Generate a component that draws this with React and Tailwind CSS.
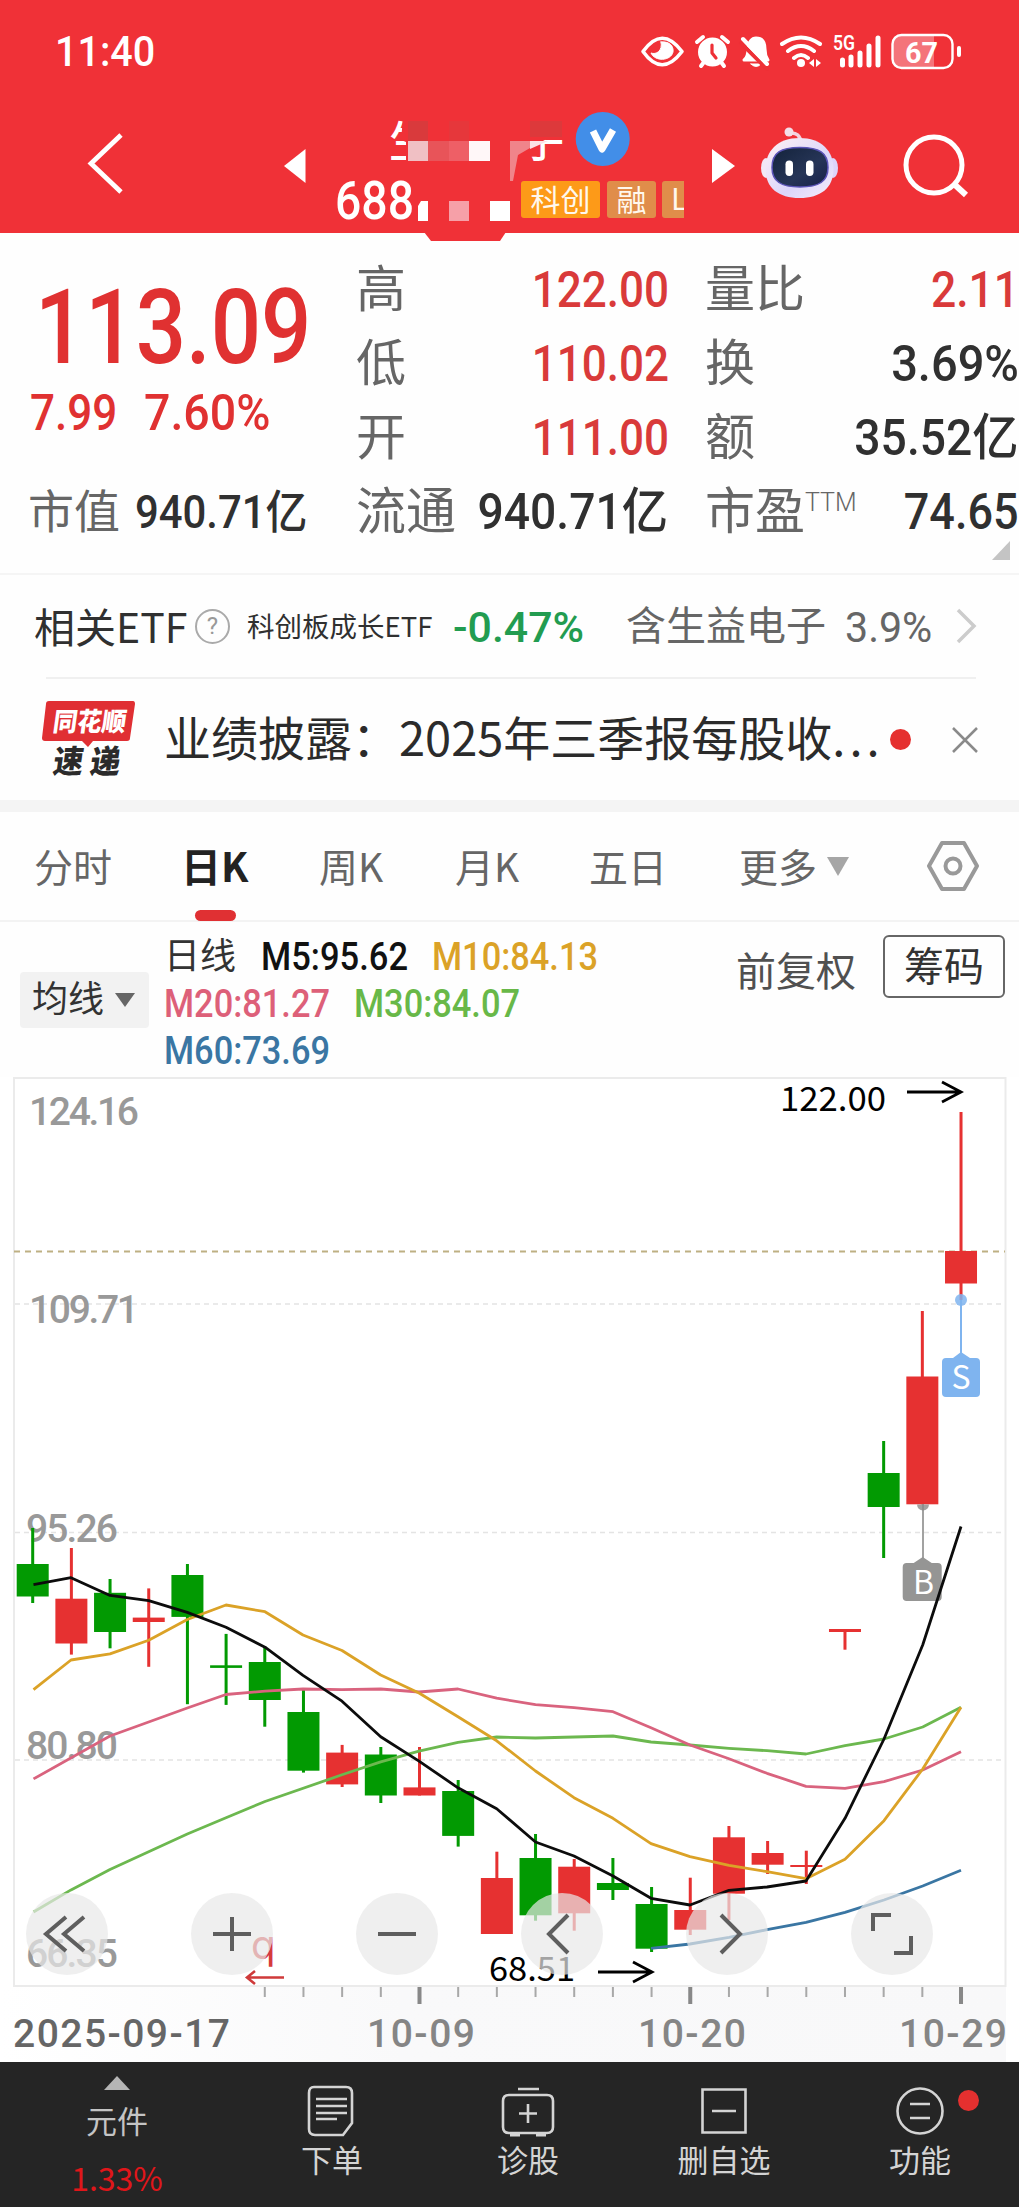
import React from 'react';

const candleX = (i) => 32.7 + i * 38.68;

// [direction, high, body top, body bottom, low]
const candles = [
  ['down', 1528, 1564, 1596.5, 1603],
  ['up', 1548, 1598.7, 1643.5, 1654.6],
  ['down', 1579, 1592.8, 1632, 1648.3],
  ['up', 1588.4, 1617.6, 1622, 1666.8],
  ['down', 1564, 1575, 1616.9, 1704.2],
  ['down', 1633.9, 1665.3, 1667.9, 1704.9],
  ['down', 1646.5, 1662, 1700, 1726.7],
  ['down', 1690, 1712, 1770.7, 1772.6],
  ['up', 1744.9, 1752.6, 1784.4, 1787],
  ['down', 1747, 1754.5, 1795.5, 1803],
  ['up', 1747, 1787.4, 1795.5, 1795.5],
  ['down', 1780, 1791, 1835.9, 1846.6],
  ['up', 1851.7, 1878, 1934, 1934],
  ['down', 1834, 1858, 1915.3, 1920.7],
  ['up', 1859, 1866.7, 1913.3, 1930.7],
  ['down', 1858, 1883, 1890, 1900],
  ['down', 1887, 1904, 1948.7, 1952],
  ['up', 1877.7, 1910, 1929.7, 1935],
  ['up', 1826, 1837.3, 1893.7, 1920],
  ['up', 1841, 1853, 1864.7, 1874],
  ['up', 1850.7, 1865, 1867, 1884],
  ['up', 1629, 1629, 1632, 1649.7],
  ['down', 1441, 1473, 1507, 1558],
  ['up', 1311, 1376.5, 1504.3, 1504.3],
  ['up', 1112, 1251, 1283.5, 1300],
];

const averages = [
  {
    color: '#3a76a3',
    points: '651,1948.3 690,1944 729,1937.3 767,1929.7 806,1922.3 845,1912.3 884,1900 922.7,1886 961,1870.3',
  },
  {
    color: '#6cb84f',
    points:
      '33.5,1912 71,1889.9 110,1869.5 187.3,1834 226,1817.7 265,1801.5 342,1774.8 380.7,1761.9 419,1751.1 458,1742.3 496.7,1737 535.5,1738 613,1736 651,1742 690,1745 729,1748.3 767,1750.7 806,1754 845,1745.7 884,1739 922.7,1727 961,1707.3',
  },
  {
    color: '#d9637e',
    points:
      '33.5,1778.9 110,1736 187.3,1708 226,1694.5 265,1691.2 303,1689 342,1689.7 380.7,1689 419,1692 458,1689 496.7,1698.2 535.5,1704.7 574,1707.7 613,1711.7 651,1727.7 690,1745 729,1758.7 767,1773.3 806,1786.3 845,1788.3 884,1781.7 922.7,1770 961,1751.7',
  },
  {
    color: '#dba227',
    points:
      '33.5,1689.7 71,1660 110,1653.9 148.7,1640.2 187.3,1619.5 226,1605 265,1611.7 303,1635 342,1650.5 380.7,1675 419,1693 458,1716.7 496.7,1740.8 535.5,1771 574,1797.7 613,1818.3 651,1843.7 690,1856.7 729,1865.3 767,1871.7 806,1878.7 845,1859.3 884,1820.7 922.7,1769 961,1707.3',
  },
  {
    color: '#0c0c0c',
    points:
      '33.5,1584.7 71,1577.7 110,1595.4 148.7,1600.6 187.3,1612.4 226,1627.2 265,1647.2 303,1675.3 342,1701.2 380.7,1736.7 419,1761.1 458,1787.8 496.7,1808.7 535.5,1842 574,1856 613,1876 651,1898.3 690,1905 729,1890.3 767,1887 806,1881 845,1818.3 884,1739 922.7,1645 961,1526.5',
  },
];

const priceLabels = [
  { text: '124.16', x: 29, y: 1125, w: 110 },
  { text: '109.71', x: 29, y: 1323, w: 110 },
  { text: '95.26', x: 26, y: 1542, w: 92 },
  { text: '80.80', x: 26, y: 1759, w: 92 },
  { text: '66.35', x: 26, y: 1967, w: 92 },
];

const dates = [
  { text: '2025-09-17', x: 13, w: 217, color: '#666666' },
  { text: '10-09', x: 367, w: 108, color: '#858585' },
  { text: '10-20', x: 638, w: 108, color: '#858585' },
  { text: '10-29', x: 899, w: 108, color: '#858585' },
];

const StatusIcons = () => (
  <svg className="h-[40px] w-[340px]" viewBox="635 30 340 40" fill="none" stroke="#fff" strokeLinecap="round" strokeLinejoin="round">
    <path d="M643 50.5Q662 24 682 50.5Q662 77 643 50.5Z" strokeWidth="3.6" />
    <path d="M661 41c8-1 13 4 12 10-2 9-18 10-22 1 5 2 12-2 10-11Z" fill="#fff" strokeWidth="1" />
    <circle cx="712.500" cy="51" r="13" fill="#fff" strokeWidth="3" />
    <path d="M697 41l6-5M728 41l-6-5M701 65l3-4M724 65l-3-4" strokeWidth="4" />
    <path d="M712 44v8l4 5" stroke="#ee3036" strokeWidth="3.200" />
    <path d="M744 59c4-3 4-7 4-11 0-7 4-11 8-11h0c7 0 9 5 9 11 0 5 1 8 3 11Z" fill="#fff" strokeWidth="3" />
    <path d="M751 63h10q-5 5-10 0Z" fill="#fff" strokeWidth="1" />
    <path d="M741 42l26 26" stroke="#ee3036" strokeWidth="4" />
    <path d="M743 38l24 25" strokeWidth="4" />
    <path d="M782 43q19-13 38 0M788 50q13-10 26 0M794 57q7-6 14 0" strokeWidth="4" />
    <circle cx="801" cy="62" r="4" fill="#fff" stroke="none" />
    <path d="M814 58v8l-5-4zM816 58v8l5-4z" fill="#fff" stroke="none" />
    <path d="M842.500 59v5M851 56v8M860 52v12M869 45v19M878 37v27" strokeWidth="5" />
    <text x="833" y="49" fontSize="20" fontWeight="600" fill="#fff" stroke="none" textLength="22" lengthAdjust="spacingAndGlyphs">5G</text>
    <path d="M900 34.500h34v32h-34q-8 0-8-8v-16q0-8 8-8Z" fill="#f4747a" stroke="none" />
    <rect x="892.500" y="34" width="60" height="33" rx="9" strokeWidth="2.400" />
    <path d="M959 47v7" strokeWidth="4" />
    <text x="905" y="61.500" fontSize="29" fontWeight="700" fill="#fff" stroke="none" textLength="33" lengthAdjust="spacingAndGlyphs">67</text>
  </svg>
);

// Stock name and code with the mosaic laid over them
const StockTitle = () => (
  <svg className="h-[130px] w-[406px]" viewBox="306 111 406 130">
    <defs>
      <clipPath id="nameStart">
        <path d="M385 118h18l-2 22 5 2v22h-21z" />
      </clipPath>
      <clipPath id="nameEnd">
        <path d="M518 155l32-18h20v28h-40z" />
      </clipPath>
    </defs>
    <g fill="#fff" fontSize="43" fontWeight="500" className='font-["Noto_Sans_CJK_SC",sans-serif]'>
      <text x="389" y="157" clipPath="url(#nameStart)">生</text>
      <text x="521" y="157" clipPath="url(#nameEnd)">子</text>
    </g>
    <rect x="408" y="121" width="20" height="20" fill="#d93a3c" />
    <rect x="449" y="121" width="20" height="20" fill="#e6373b" />
    <rect x="530" y="121" width="32" height="16" fill="#dd393b" />
    <rect x="408" y="141" width="20" height="20" fill="#f0c0c4" />
    <rect x="428" y="141" width="21" height="20" fill="#e85459" />
    <rect x="449" y="141" width="20" height="20" fill="#ee5f66" />
    <rect x="469" y="141" width="21" height="20" fill="#fff7f8" />
    <path d="M510 141h32l-24 14-5 26h-3z" fill="#f0848a" />
    <path d="M530 141h18l-18 8z" fill="#fbe3e5" />
    <text x="335" y="219" fontSize="53" fontWeight="500" fill="#fff" textLength="79" lengthAdjust="spacingAndGlyphs">688</text>
    <path d="M418 206l3-5h7v20h-10z" fill="#fff" />
    <rect x="449" y="201" width="20" height="20" fill="#f6a0a8" />
    <rect x="490" y="201" width="20" height="20" fill="#fff" />
    <circle cx="602.700" cy="139" r="27" fill="#428ee8" />
    <path d="M593 131l9 18 11-19" fill="none" stroke="#fff" strokeWidth="7" strokeLinejoin="round" />
    <rect x="521" y="181" width="79" height="37" rx="3" fill="#fd9a18" />
    <rect x="607" y="181" width="49" height="37" rx="3" fill="#e08d4a" />
    <path d="M665 181h19v37h-19q-3 0-3-3v-31q0-3 3-3z" fill="#e08d4a" />
    <g fill="#fff8ee" fontSize="30" className='font-["Noto_Sans_CJK_SC",sans-serif]'>
      <text x="530.500" y="211">科创</text>
      <text x="616.500" y="211">融</text>
      <svg x="670" y="181" width="14" height="37"><text x="1" y="29">L</text></svg>
    </g>
  </svg>
);

const Robot = () => (
  <svg className="h-[76px] w-[80px]" viewBox="760 124 80 76">
    <defs>
      <linearGradient id="shell" x1="0" y1="0" x2="1" y2="1">
        <stop offset="0" stopColor="#fff1f4" />
        <stop offset=".6" stopColor="#dcd6fa" />
        <stop offset="1" stopColor="#f6eefc" />
      </linearGradient>
      <linearGradient id="face" x1="0" y1="0" x2="1" y2="1">
        <stop offset="0" stopColor="#14233b" />
        <stop offset=".6" stopColor="#263557" />
        <stop offset="1" stopColor="#17204a" />
      </linearGradient>
    </defs>
    <path d="M790 133q10-1 11 10" fill="none" stroke="#f3d3df" strokeWidth="3.500" />
    <circle cx="789" cy="132" r="4.500" fill="#f3dfe8" />
    <ellipse cx="766" cy="168" rx="5" ry="10" fill="#f2e8f5" />
    <ellipse cx="833" cy="168" rx="5" ry="10" fill="#ddd4fa" />
    <path d="M799.500 138c22 0 34 13 34 31 0 19-13 29-34 29s-34-10-34-29c0-18 12-31 34-31z" fill="url(#shell)" />
    <path d="M800 147.500c19 0 28 5 28 20 0 14-9 19.500-28 19.500s-28-5.500-28-19.500c0-15 9-20 28-20z" fill="url(#face)" stroke="#5b54b8" strokeWidth="1.500" />
    <rect x="785.500" y="160.500" width="7.500" height="15.500" rx="3.700" fill="#fff" />
    <rect x="806" y="160.500" width="7.500" height="15.500" rx="3.700" fill="#fff" />
  </svg>
);

const Header = () => (
  <header className="relative h-[233px] bg-[#f03137] text-white">
    <div className="flex h-[102px] items-center justify-between pr-[44px] pl-[55px]">
      <span className="inline-block origin-left scale-x-[.94] text-[42px] font-medium">11:40</span>
      <StatusIcons />
    </div>
    <div className="flex h-[130px] items-start">
      <svg className="mt-[28px] ml-[84px] h-[66px] w-[42px]" viewBox="84 130 42 66" fill="none" stroke="#fff" strokeWidth="4.800">
        <path d="M121 135L91 163.500 121 192" />
      </svg>
      <svg className="mt-[46px] ml-[157px] h-[36px] w-[23px]" viewBox="283 148 23 36">
        <path d="M305.500 149v34L284 166z" fill="#fff" />
      </svg>
      <div className="mt-[9px]">
        <StockTitle />
      </div>
      <svg className="mt-[46px] h-[36px] w-[24px]" viewBox="712 148 24 36">
        <path d="M712 149v34l23-17z" fill="#fff" />
      </svg>
      <div className="mt-[22px] ml-[24px]">
        <Robot />
      </div>
      <svg className="mt-[30px] ml-[60px] h-[68px] w-[72px]" viewBox="900 132 72 68" fill="none" stroke="#fff" strokeWidth="5">
        <circle cx="934" cy="165" r="28" />
        <path d="M954 184l12 11" strokeWidth="6" />
      </svg>
    </div>
    <svg className="absolute top-[232px] left-[424px] h-[10px] w-[82px]" viewBox="0 0 82 10">
      <path d="M0 0h82l-6 9H7z" fill="#f03137" />
    </svg>
  </header>
);

const Stat = ({ label, sup, value, color }) => (
  <div className="flex h-[74px] items-center justify-between pt-[2px]">
    <span className="flex text-[50px] leading-[64px] whitespace-nowrap text-[#666666]">
      {label}
      {sup && <sup className="mt-[22px] text-[25px] leading-none font-light">{sup}</sup>}
    </span>
    <span className={`inline-block origin-right text-[50px] leading-[64px] font-medium whitespace-nowrap ${color}`}>{value}</span>
  </div>
);

const Quote = () => (
  <section className="relative flex h-[342px] border-b-2 border-[#f5f5f5] pt-[19px]">
    <div className="w-[356px] pl-[30px] text-[#e03131]">
      <div className="mt-[10px] flex h-[130px] items-center pl-[5px]">
        <span className="inline-block origin-left scale-x-[.86] text-[103px] leading-none font-medium">113.09</span>
      </div>
      <div className="mt-[2px] flex h-[38px] items-center text-[50px] leading-[38px] font-medium">
        <span className="w-[114px]"><span className="inline-block origin-left scale-x-[.88]">7.99</span></span>
        <span className="inline-block origin-left scale-x-[.93]">7.60%</span>
      </div>
      <div className="mt-[42px] flex h-[74px] items-center pt-[2px] leading-[60px] whitespace-nowrap">
        <span className="-ml-[2px] w-[107px] text-[46px] text-[#666666]">市值</span>
        <span className="inline-block origin-left scale-x-[.91] text-[46px] font-medium text-[#303030]">940.71亿</span>
      </div>
    </div>
    <div className="w-[312px]">
      <Stat label="高" value="122.00" color="translate-x-px scale-x-[.88] text-[#d93a3a]" />
      <Stat label="低" value="110.02" color="translate-x-px scale-x-[.88] text-[#d93a3a]" />
      <Stat label="开" value="111.00" color="translate-x-px scale-x-[.88] text-[#d93a3a]" />
      <Stat label="流通" value="940.71亿" color="scale-x-[.925] text-[#303030]" />
    </div>
    <div className="ml-[37px] w-[314px]">
      <Stat label="量比" value="2.11" color="scale-x-[.89] text-[#d93a3a]" />
      <Stat label="换" value="3.69%" color="scale-x-[.94] text-[#303030]" />
      <Stat label="额" value="35.52亿" color="scale-x-[.925] text-[#303030]" />
      <Stat label="市盈" sup="TTM" value="74.65" color="scale-x-[.9] text-[#303030]" />
    </div>
    <svg className="absolute right-[9px] bottom-[13px] h-[19px] w-[18px]" viewBox="0 0 18 19">
      <path d="M18 0v19H0z" fill="#c4c4c4" />
    </svg>
  </section>
);

const RelatedEtf = () => (
  <div className="flex h-[102px] items-center whitespace-nowrap">
    <span className="ml-[34px] w-[161px] text-[41px] text-[#303030] font-['Noto_Sans_CJK_SC',sans-serif]">相关ETF</span>
    <span className="flex h-[35px] w-[35px] items-center justify-center rounded-full border-2 border-[#aaaaaa] text-[24px] text-[#999999]">?</span>
    <span className="ml-[17px] w-[206px] text-[27.5px] text-[#303030] font-['Noto_Sans_CJK_SC',sans-serif]">科创板成长ETF</span>
    <span className="w-[173px] pt-[2px] text-[42px] font-medium text-[#229c50]"><span className="inline-block origin-left scale-x-[1.02]">-0.47%</span></span>
    <span className="w-[219px] pt-[2px] text-[40px] text-[#666666]">含生益电子</span>
    <span className="w-[111px] pt-[2px] text-[42px] text-[#666666]"><span className="inline-block origin-left scale-x-[.98]">3.9%</span></span>
    <svg className="h-[38px] w-[22px]" viewBox="0 0 22 38" fill="none" stroke="#cccccc" strokeWidth="3.500">
      <path d="M2 3l16 16L2 35" />
    </svg>
  </div>
);

const News = () => (
  <div className="flex h-[121px] items-center">
    <svg className="ml-[40px] h-[80px] w-[98px]" viewBox="40 698 98 80">
      <path d="M49 699h84q2 0 2 3l-5 34q0 3-3 3H93l-5 6-6-6H45q-3 0-3-3l4-34q0-3 3-3z" fill="#e02f33" />
      <g fontWeight="900" className='font-["Noto_Sans_CJK_SC",sans-serif]'>
        <text transform="translate(52 729) skewX(-8)" fontSize="26" fill="#fff" textLength="73" lengthAdjust="spacingAndGlyphs">同花顺</text>
        <text transform="translate(52 771) skewX(-8)" fontSize="32" fill="#2b2b2b" textLength="30" lengthAdjust="spacingAndGlyphs">速</text>
        <text transform="translate(89 771) skewX(-8)" fontSize="32" fill="#2b2b2b" textLength="30" lengthAdjust="spacingAndGlyphs">递</text>
      </g>
    </svg>
    <p className="mb-[7px] ml-[26px] w-[724px] text-[47px] whitespace-nowrap text-[#2b2b2b] font-['Noto_Sans_CJK_SC',sans-serif]">
      业绩披露：2025年三季报每股收<span className="tracking-[4px]">...</span>
    </p>
    <span className="ml-[2px] h-[21px] w-[21px] rounded-full bg-[#e5302f]" />
    <svg className="ml-[41px] h-[26px] w-[26px]" viewBox="0 0 26 26" stroke="#8a8a8a" strokeWidth="2.500">
      <path d="M1 1l24 24M25 1L1 25" />
    </svg>
  </div>
);

const Tabs = () => (
  <nav className="relative flex h-[110px] items-center border-b-2 border-[#f3f3f3] text-[39px] whitespace-nowrap text-[#666666] font-['Noto_Sans_CJK_SC',sans-serif]">
    <span className="mb-[2px] ml-[34px] w-[147px]">分时</span>
    <span className="mb-[2px] w-[138px] text-[40px] font-bold text-[#222222]">日K</span>
    <span className="mb-[2px] w-[136px]">周K</span>
    <span className="mb-[2px] w-[134px]">月K</span>
    <span className="mb-[2px] w-[150px]">五日</span>
    <span className="mb-[2px] w-[88px]">更多</span>
    <svg className="h-[19px] w-[22px]" viewBox="0 0 22 19">
      <path d="M0 0h22L11 19z" fill="#a6a6a6" />
    </svg>
    <svg className="ml-[78px] h-[50px] w-[52px]" viewBox="0 0 52 50" fill="none" stroke="#999999" strokeLinejoin="round">
      <path d="M15 2h22l13 23-13 23H15L2 25z" strokeWidth="4" />
      <circle cx="26" cy="25" r="7.500" strokeWidth="4" />
    </svg>
    <span className="absolute -bottom-[1px] left-[195px] h-[11px] w-[41px] rounded-full bg-[#e03033]" />
  </nav>
);

const Legend = ({ className, width, children }) => (
  <span className={className}>
    <svg className="block h-[47px] overflow-visible" width={width} viewBox={`0 0 ${width} 47`}>
      <text x="-2" y="36" fontSize="38" fontWeight="500" fill="currentColor" textLength={width} lengthAdjust="spacingAndGlyphs">{children}</text>
    </svg>
  </span>
);

const Indicators = () => (
  <div className="flex h-[155px]">
    <button className="mt-[50px] ml-[20px] flex h-[56px] w-[129px] items-center rounded-sm bg-[#f2f2f2] pl-[12px] text-[36px] text-[#333333]">
      均线
      <svg className="ml-[11px] h-[14px] w-[20px]" viewBox="0 0 20 14">
        <path d="M0 0h20L10 14z" fill="#666666" />
      </svg>
    </button>
    <div className="ml-[17px] w-[570px] pt-[12px]">
      <div className="flex h-[47px] items-center">
        <span className="-ml-[2px] w-[99px] text-[36px] leading-[47px] text-[#333333]">日线</span>
        <Legend className="w-[171px] text-[#111111]" width={147}>M5:95.62</Legend>
        <Legend className="text-[#dba227]" width={166}>M10:84.13</Legend>
      </div>
      <div className="flex h-[47px] items-center">
        <Legend className="w-[190px] text-[#dd6079]" width={166}>M20:81.27</Legend>
        <Legend className="text-[#68b848]" width={166}>M30:84.07</Legend>
      </div>
      <div className="flex h-[47px] items-center">
        <Legend className="text-[#3a76a3]" width={166}>M60:73.69</Legend>
      </div>
    </div>
    <span className="mt-[18px] w-[147px] text-[40px] leading-[66px] whitespace-nowrap text-[#505050]">前复权</span>
    <button className="mt-[13px] flex h-[63px] w-[122px] items-center justify-center rounded-md border-2 border-[#666666] pt-[2px] text-[40px] text-[#333333]">
      筹码
    </button>
  </div>
);

const Candle = ({ index, data }) => {
  const [direction, high, top, bottom, low] = data;
  const x = candleX(index);
  const color = direction === 'up' ? '#e63131' : '#029a02';
  return (
    <g fill={color}>
      <rect x={x - 1.5} y={high} width="3" height={low - high} />
      <rect x={x - 16} y={top} width="32" height={bottom - top} />
    </g>
  );
};

const controls = [
  'M40 24L20 41l20 17M58 24L38 41l20 17',
  'M22 41h38M41 24v34',
  'M22 41h38',
  'M47 22L28 41l19 19',
  'M35 22l19 19-19 19',
  'M22 38V22h18M60 43v17H43',
];

const Chart = () => (
  <div className="relative h-[985px] bg-white">
    <svg className="block h-[985px] w-full" viewBox="0 1077 1019 985">
      <defs>
        <linearGradient id="axisBg" x1="0" x2="1">
          <stop offset="0" stopColor="#ffffff" />
          <stop offset=".4" stopColor="#f9f9fa" />
          <stop offset="1" stopColor="#f8f8f9" />
        </linearGradient>
      </defs>
      <rect x="0" y="1987" width="1006" height="75" fill="url(#axisBg)" />
      <path d="M14 1078H1005.500V1986H14Z" fill="none" stroke="#ebebeb" strokeWidth="2" />
      <path d="M15 1304H1005M15 1532.500H1005M15 1760H1005" stroke="#e4e4e4" strokeWidth="1.500" strokeDasharray="5 4" />
      <path d="M14 1251.500H1005" stroke="#beb083" strokeWidth="1.800" strokeDasharray="6 5" />
      {priceLabels.map((label) => (
        <text key={label.text} x={label.x} y={label.y} fontSize="39" fontWeight="500" fill="#999999" textLength={label.w}>
          {label.text}
        </text>
      ))}
      {candles.map((data, index) => (
        <Candle key={index} index={index} data={data} />
      ))}
      <g fill="#8b8b8a">
        <path d="M922.200 1504h1.600v55h-1.600z" />
        <path d="M917 1504.500a6 6 0 0 0 12 0z" opacity=".8" />
        <path d="M922.700 1557l9 6h6q4 0 4 4v30q0 4-4 4h-31q-4 0-4-4v-30q0-4 4-4h7z" fill="#959594" />
      </g>
      <g fill="#7fb4ef">
        <circle cx="961" cy="1300" r="6" opacity=".85" />
        <path d="M960 1300h2v54h-2z" />
        <path d="M961 1352l9 6h6q4 0 4 4v31q0 4-4 4h-30q-4 0-4-4v-31q0-4 4-4h7z" />
      </g>
      <g fill="#fff" fontSize="32" textAnchor="middle" className='font-["Noto_Sans_CJK_SC",sans-serif]'>
        <text x="961" y="1388.500">S</text>
        <text x="923.500" y="1593.500">B</text>
      </g>
      {averages.map((line) => (
        <polyline key={line.color} points={line.points} fill="none" stroke={line.color} strokeWidth="2.800" strokeLinejoin="round" />
      ))}
      <g fill="#000" className='font-["Noto_Sans_CJK_SC",sans-serif]' fontSize="34">
        <text x="780" y="1111" textLength="106" lengthAdjust="spacingAndGlyphs">122.00</text>
        <text x="489" y="1981" textLength="86" lengthAdjust="spacingAndGlyphs">68.51</text>
      </g>
      <path d="M907 1092h54M942 1082l19 10-19 10M598 1972h53M633 1962l19 10-19 10" fill="none" stroke="#000" strokeWidth="2.800" />
      <text x="251" y="1959" fontSize="40" fill="#d63b3b" className="font-[Inter,sans-serif]">q</text>
      <path d="M284 1977.500H247M255 1971l-8 6.500 8 6.500" fill="none" stroke="#cf3a3a" strokeWidth="2.600" />
      {candles.map((_, index) => {
        if (index < 6) return null;
        const major = index === 10 || index === 17 || index === 24;
        return (
          <rect
            key={index}
            x={candleX(index) - (major ? 2 : 1)}
            y="1987"
            width={major ? 4 : 2}
            height={major ? 17 : 10}
            fill={major ? '#888888' : '#a8a8a8'}
          />
        );
      })}
      {dates.map((date) => (
        <text key={date.text} x={date.x} y="2046.500" fontSize="39" fontWeight="500" fill={date.color} textLength={date.w}>
          {date.text}
        </text>
      ))}
    </svg>
    <div className="absolute top-[816px] left-[26px] flex gap-[83px]">
      {controls.map((path) => (
        <button key={path} className="h-[82px] w-[82px] rounded-full bg-[#e8e8e8]/70">
          <svg viewBox="0 0 82 82" fill="none" stroke="#5e5e5e" strokeWidth="4">
            <path d={path} />
          </svg>
        </button>
      ))}
    </div>
  </div>
);

const BarItem = ({ label, children }) => (
  <div className="flex w-[196px] flex-col items-center pt-[22px]">
    <svg className="h-[54px] w-[60px]" viewBox="0 0 60 54" fill="none" stroke="#d4d4d4" strokeWidth="2.600">
      {children}
    </svg>
    <span className="text-[31px] leading-[42px]">{label}</span>
  </div>
);

const BottomBar = () => (
  <footer className="relative flex h-[145px] bg-[#252525] text-[#d4d4d4] font-['Noto_Sans_CJK_SC',sans-serif]">
    <div className="flex w-[234px] flex-col items-center pt-[14px]">
      <svg className="h-[14px] w-[26px]" viewBox="0 0 26 14">
        <path d="M13 0l13 14H0z" fill="#b5b5b5" />
      </svg>
      <span className="mt-[9px] text-[31px] leading-[42px] text-[#c4c4c4]">元件</span>
      <span className="mt-[15px] text-[32px] leading-[42px] text-[#e0161a]">1.33%</span>
    </div>
    <BarItem label="下单">
      <path d="M12 3h32q6 0 6 6v30l-9 12H13q-6 0-6-6V9q0-6 5-6z" />
      <path d="M14 15h31M14 22h31M14 29h31M14 35h21" />
    </BarItem>
    <BarItem label="诊股">
      <path d="M11 11h38q6 0 6 6v26q0 6-6 6H11q-6 0-6-6V17q0-6 6-6zM20 5h21M30 20v19M21 29.500h18" />
      <path d="M12 51h10M38 51h10" strokeWidth="3" />
    </BarItem>
    <BarItem label="删自选">
      <path d="M8.500 5.500h43v43h-43zM18 27h24" />
    </BarItem>
    <BarItem label="功能">
      <circle cx="30" cy="27" r="22.500" />
      <path d="M20 20h20M20 34h20" />
    </BarItem>
    <span className="absolute top-[28px] left-[958px] h-[21px] w-[21px] rounded-full bg-[#e5302f]" />
  </footer>
);

const App = () => {
  return (
    <div className="h-[2207px] w-[1019px] overflow-hidden bg-[#fefefe] font-[Roboto,'Noto_Sans_CJK_SC',sans-serif]">
      <Header />
      <Quote />
      <RelatedEtf />
      <div className="mr-[43px] ml-[46px] border-t-2 border-[#f0f0f0]" />
      <News />
      <div className="h-[12px] bg-[#f4f4f4]" />
      <Tabs />
      <Indicators />
      <Chart />
      <BottomBar />
    </div>
  );
};

export default App;
